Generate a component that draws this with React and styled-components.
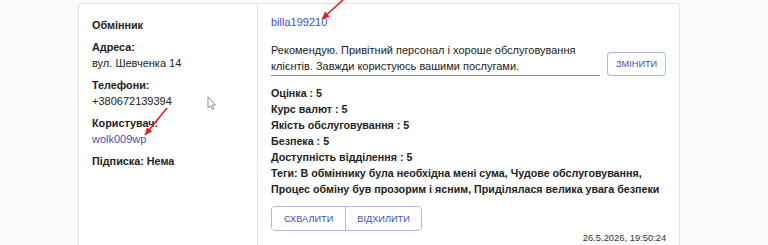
import React from "react";
import styled, { createGlobalStyle } from "styled-components";

const GlobalStyle = createGlobalStyle`
  body {
    margin: 0;
    background: #fafafa;
    font-family: "Liberation Sans", Arial, sans-serif;
    color: #222;
    font-size: 11px;
  }
`;

const Page = styled.div`
  position: relative;
  padding: 3px 0 0 78px;
  height: 245px;
  overflow: hidden;
`;

const Card = styled.div`
  width: 600px;
  display: grid;
  grid-template-columns: 179px 1fr;
  background: #fff;
  border: 1px solid #e3e3e3;
  border-radius: 4px;
  box-shadow: 0 1px 2px rgba(0, 0, 0, 0.06);
`;

const Side = styled.div`
  padding: 13px 13px 40px 13px;
  border-right: 1px solid #e3e3e3;
  display: flex;
  flex-direction: column;
  gap: 6px;
`;

const Group = styled.div`
  display: flex;
  flex-direction: column;
  line-height: 16px;
`;

const Label = styled.div`
  font-weight: bold;
  font-size: 10.8px;
  color: #222;
`;

const Value = styled.div`
  color: #222;
`;

const Link = styled.a`
  color: #3f51b5;
  text-decoration: none;
  cursor: pointer;
`;

const Main = styled.div`
  padding: 12px 14px 10px 13px;
  display: flex;
  flex-direction: column;
`;

const EditRow = styled.div`
  display: flex;
  align-items: flex-end;
  gap: 7px;
  margin-top: 13px;
`;

const Comment = styled.div`
  width: 329px;
  line-height: 15.5px;
  padding: 2px 0 1px;
  border-bottom: 1px solid #8f8f8f;
`;

const OutlineButton = styled.button`
  font-family: "Liberation Sans", Arial, sans-serif;
  font-size: 9.2px;
  text-transform: uppercase;
  color: #3f51b5;
  background: #fff;
  border: 1px solid rgba(63, 81, 181, 0.4);
  border-radius: 4px;
  height: 24px;
  padding: 0 8px;
  margin-bottom: 0;
`;

const Ratings = styled.div`
  margin-top: 9px;
  display: flex;
  flex-direction: column;
  font-weight: bold;
  font-size: 10.7px;
  line-height: 16px;
`;

const ButtonGroup = styled.div`
  display: inline-flex;
  align-self: flex-start;
  margin-top: 9px;
  border: 1px solid rgba(63, 81, 181, 0.4);
  border-radius: 4px;
  overflow: hidden;
`;

const GroupButton = styled.button`
  font-family: "Liberation Sans", Arial, sans-serif;
  font-size: 9.2px;
  color: #3f51b5;
  background: #fff;
  border: none;
  border-left: ${(p) => (p.$first ? "none" : "1px solid rgba(63, 81, 181, 0.4)")};
  height: 23px;
  padding: 0 ${(p) => (p.$first ? "12px" : "11px")};
`;

const Stamp = styled.div`
  align-self: flex-end;
  margin-top: 1px;
  font-size: 9.4px;
  line-height: 11px;
  color: #333;
`;

const Overlay = styled.svg`
  position: absolute;
  left: 0;
  top: 0;
  pointer-events: none;
`;

const Arrow = ({ x1, y1, x2, y2 }) => {
  const a = Math.atan2(y2 - y1, x2 - x1);
  const l = 8;
  const p1 = [x2 - l * Math.cos(a - 0.45), y2 - l * Math.sin(a - 0.45)];
  const p2 = [x2 - l * Math.cos(a + 0.45), y2 - l * Math.sin(a + 0.45)];
  return (
    <g>
      <line x1={x1} y1={y1} x2={x2} y2={y2} stroke="#e02020" strokeWidth="1.6" />
      <polygon points={`${x2},${y2} ${p1[0]},${p1[1]} ${p2[0]},${p2[1]}`} fill="#e02020" />
    </g>
  );
};

const App = () => {
  return (
    <Page>
      <GlobalStyle />
      <Card>
        <Side>
          <Group>
            <Label>Обмінник</Label>
          </Group>
          <Group>
            <Label>Адреса:</Label>
            <Value>вул. Шевченка 14</Value>
          </Group>
          <Group>
            <Label>Телефони:</Label>
            <Value>+380672139394</Value>
          </Group>
          <Group>
            <Label>Користувач:</Label>
            <Link>wolk009wp</Link>
          </Group>
          <Group>
            <Label>Підписка: Нема</Label>
          </Group>
        </Side>
        <Main>
          <Link>billa199210</Link>
          <EditRow>
            <Comment>
              Рекомендую. Привітний персонал і хороше обслуговування клієнтів. Завжди
              користуюсь вашими послугами.
            </Comment>
            <OutlineButton>Змінити</OutlineButton>
          </EditRow>
          <Ratings>
            <div>Оцінка : 5</div>
            <div>Курс валют : 5</div>
            <div>Якість обслуговування : 5</div>
            <div>Безпека : 5</div>
            <div>Доступність відділення : 5</div>
            <div>
              Теги: В обміннику була необхідна мені сума, Чудове обслуговування,
              Процес обміну був прозорим і ясним, Приділялася велика увага безпеки
            </div>
          </Ratings>
          <ButtonGroup>
            <GroupButton $first>СХВАЛИТИ</GroupButton>
            <GroupButton>ВІДХИЛИТИ</GroupButton>
          </ButtonGroup>
          <Stamp>26.5.2026, 19:50:24</Stamp>
        </Main>
      </Card>
      <Overlay width="768" height="245">
        <Arrow x1={167} y1={108} x2={145} y2={135} />
        <Arrow x1={343} y1={0} x2={322} y2={19} />
        <path
          d="M208 97 L208 108 L210.5 105.5 L212.5 109.5 L214 108.8 L212 105 L215.5 105 Z"
          fill="#fff"
          stroke="#777"
          strokeWidth="0.8"
          strokeLinejoin="round"
        />
      </Overlay>
    </Page>
  );
};

export default App;
